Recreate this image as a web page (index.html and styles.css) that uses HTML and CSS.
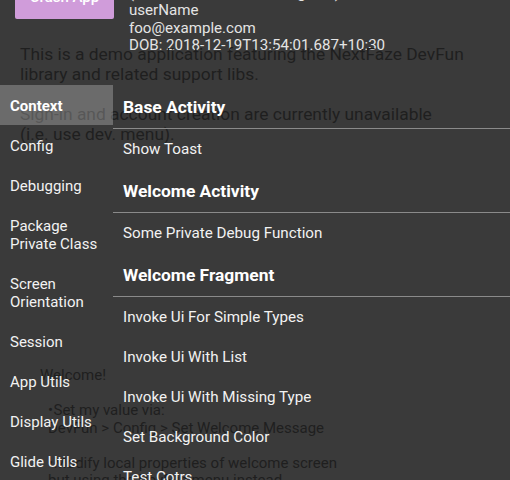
FILE: index.html
```html
<!DOCTYPE html>
<html>
<head>
<meta charset="utf-8">
<link rel="stylesheet" href="styles.css">
</head>
<body>
<div class="screen">
  <div class="app">
    <div class="top">
      <div class="crash">Crash App</div>
      <div class="user">
        <div>(John Smith, admin, id 1, guest)</div>
        <div>userName</div>
        <div>foo@example.com</div>
        <div>DOB: 2018-12-19T13:54:01.687+10:30</div>
      </div>
    </div>
    <div class="intro">
      <p>This is a demo application featuring the NextFaze DevFun<br>library and related support libs.</p>
      <p>Sign-in and account creation are currently unavailable<br>(i.e. use dev. menu).</p>
    </div>
    <div class="welcome">
      <p class="hello">Welcome!</p>
      <p class="bullet"><span class="dot">•</span>Set my value via:<br>DevFun &gt; Config &gt; Set Welcome Message</p>
      <p class="bullet"><span class="dot">•</span>Modify local properties of welcome screen<br>but using the DevFun menu instead</p>
    </div>
  </div>

  <div class="menu">
    <nav class="groups">
      <div class="group selected">Context</div>
      <div class="group">Config</div>
      <div class="group">Debugging</div>
      <div class="group">Package<br>Private Class</div>
      <div class="group">Screen<br>Orientation</div>
      <div class="group">Session</div>
      <div class="group">App Utils</div>
      <div class="group">Display Utils</div>
      <div class="group">Glide Utils</div>
    </nav>
    <div class="items">
      <div class="cat">Base Activity</div>
      <div class="item">Show Toast</div>
      <div class="cat">Welcome Activity</div>
      <div class="item">Some Private Debug Function</div>
      <div class="cat">Welcome Fragment</div>
      <div class="item">Invoke Ui For Simple Types</div>
      <div class="item">Invoke Ui With List</div>
      <div class="item">Invoke Ui With Missing Type</div>
      <div class="item">Set Background Color</div>
      <div class="item">Test Cotrs</div>
    </div>
  </div>
</div>
</body>
</html>
```

FILE: styles.css
```css
html, body {
  margin: 0;
  padding: 0;
}
body {
  background: #3a3a3a;
  font-family: Roboto, "Noto Sans", sans-serif;
  width: 510px;
  height: 480px;
  overflow: hidden;
}
.screen {
  position: relative;
  width: 510px;
  height: 480px;
  overflow: hidden;
}
.app {
  margin-top: -15.5px;
  color: #1f1f1f;
}
.top {
  display: flex;
  align-items: flex-start;
  height: 59.6px;
}
.crash {
  margin: -10px 0 0 15px;
  width: 99px;
  height: 44px;
  background: #d09cda;
  border-radius: 2px;
  color: #ffffff;
  font-size: 15px;
  font-weight: 500;
  display: flex;
  align-items: center;
  justify-content: center;
}
.user {
  margin-left: 15px;
  color: #e4e4e4;
  font-size: 15.1px;
  line-height: 17.5px;
  white-space: nowrap;
}
.intro {
  padding-left: 20px;
  font-size: 17.4px;
  line-height: 20px;
  white-space: nowrap;
}
.intro p {
  margin: 0 0 20px 0;
}
.welcome {
  margin-top: 223px;
  font-size: 15px;
  line-height: 17.5px;
  white-space: nowrap;
}
.welcome p {
  margin: 0 0 17.5px 0;
}
.hello {
  padding-left: 40px;
}
.bullet {
  padding-left: 48px;
}
.dot {
  display: inline-block;
  width: 5.5px;
}

.menu {
  position: absolute;
  top: 85px;
  left: 0;
  right: 0;
  bottom: 0;
  display: flex;
  color: #f2f2f2;
}
.groups {
  width: 113px;
  flex: none;
}
.group {
  padding: 12px 10px 10px;
  font-size: 15px;
  line-height: 18px;
}
.group.selected {
  background: rgba(255, 255, 255, 0.25);
  font-weight: bold;
  color: #ffffff;
}
.items {
  flex: 1;
}
.cat {
  height: 44px;
  box-sizing: border-box;
  display: flex;
  align-items: center;
  padding: 1px 0 0 10px;
  font-size: 17.4px;
  font-weight: bold;
  color: #ffffff;
  border-bottom: 1px solid #8a8a8a;
}
.item {
  height: 40px;
  display: flex;
  align-items: center;
  padding-left: 10px;
  font-size: 15.2px;
}
```
